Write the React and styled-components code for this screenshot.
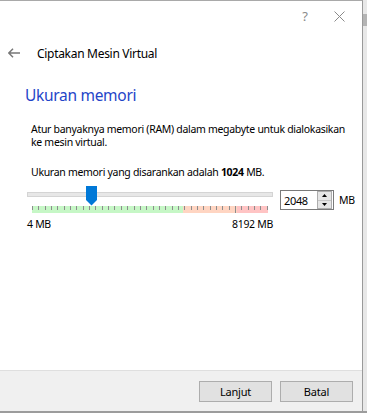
import React from 'react';
import styled, { createGlobalStyle } from 'styled-components';

const Global = createGlobalStyle`
  html, body {
    margin: 0;
    padding: 0;
    width: 367px;
    height: 413px;
    overflow: hidden;
    background: #dcdcdc;
    font-family: "Noto Sans", "Open Sans", sans-serif;
    color: #000;
  }
`;

const Screen = styled.div`
  display: flex;
  flex-direction: column;
  width: 367px;
  height: 413px;
`;

const Desk = styled.div`
  display: flex;
  height: 411px;
`;

const Dialog = styled.div`
  width: 362px;
  display: flex;
  flex-direction: column;
  background: #fff;
  border-top: 1px solid #a9a9a9;
  border-right: 1px solid #9a9a9a;
`;

const SideStrip = styled.div`
  flex: 1;
  display: flex;
  flex-direction: column;
  background: #e8e8e8;
`;

const Thumb = styled.div`
  margin-top: 14px;
  height: 12px;
  background: #b4b4b4;
`;

const Taskbar = styled.div`
  height: 2px;
  background: #9c9c9c;
`;

const TitleBar = styled.div`
  height: 30px;
  display: flex;
  justify-content: flex-end;
  align-items: center;
  color: #8a8a8a;
`;

const TitleBtn = styled.div`
  width: ${({ w }) => w}px;
  display: flex;
  justify-content: center;
  font-size: 13px;
`;

const Header = styled.div`
  display: flex;
  align-items: center;
  height: 44px;
  padding-left: 8px;
  font-size: 12px;
  letter-spacing: -0.3px;
`;

const Back = styled.div`
  width: 29px;
  display: flex;
`;

const Content = styled.div`
  flex: 1;
  padding: 9px 0 0 25px;
  display: flex;
  flex-direction: column;
`;

const Heading = styled.div`
  font-size: 15.5px;
  color: #1f45c8;
  letter-spacing: -0.3px;
`;

const Body = styled.div`
  padding: 17px 6px 0 6px;
  font-size: 10.5px;
  line-height: 13px;
  letter-spacing: -0.3px;
`;

const Para = styled.p`
  margin: 0 0 ${({ gap }) => gap || 0}px 0;
`;

const SliderRow = styled.div`
  display: flex;
  align-items: flex-start;
  margin-top: 7px;
  margin-left: 2px;
`;

const SliderCol = styled.div`
  width: 246px;
  display: flex;
  flex-direction: column;
`;

const TrackWrap = styled.div`
  position: relative;
  height: 20px;
`;

const Track = styled.div`
  margin-top: 6px;
  height: 3px;
  background: #e7e7e7;
  border: 1px solid #d4d4d4;
`;

const Handle = styled.svg`
  position: absolute;
  top: 0;
  left: 59px;
`;

const Scale = styled.div`
  margin: 0 5px;
  height: 7px;
  display: flex;
  justify-content: space-between;
  background: linear-gradient(to right,
    #c6f7c6 0%, #c6f7c6 64%,
    #ffd5c2 64%, #ffd5c2 87%,
    #ffc4c4 87%, #ffc4c4 100%);
`;

const Tick = styled.div`
  width: 1px;
  height: ${({ big }) => (big ? 7 : 4)}px;
  background: #8c8c8c;
`;

const Labels = styled.div`
  display: flex;
  justify-content: space-between;
  margin-top: 4px;
  font-size: 10.5px;
  letter-spacing: -0.3px;
`;

const Spin = styled.div`
  margin-left: 7px;
  margin-top: 4px;
  width: 48px;
  height: 18px;
  border: 1px solid #7a7a7a;
  display: flex;
  align-items: center;
  justify-content: space-between;
  padding: 0 1px 0 3px;
  box-sizing: content-box;
  font-size: 11px;
  letter-spacing: -0.35px;
`;

const SpinBtns = styled.div`
  width: 13px;
  height: 16px;
  display: flex;
  flex-direction: column;
  border: 1px solid #adadad;
  background: #e5e5e5;
`;

const SpinHalf = styled.div`
  flex: 1;
  display: flex;
  align-items: center;
  justify-content: center;
  & + & {
    border-top: 1px solid #c4c4c4;
  }
`;

const Unit = styled.div`
  margin: 7px 0 0 5px;
  font-size: 10.5px;
  letter-spacing: -0.3px;
`;

const Footer = styled.div`
  height: 39px;
  background: #f0f0f0;
  border-top: 1px solid #dfdfdf;
  display: flex;
  justify-content: flex-end;
  align-items: center;
  gap: 8px;
  padding-right: 9px;
  padding-top: 1px;
`;

const Button = styled.button`
  width: 73px;
  height: 21px;
  background: #e1e1e1;
  border: 1px solid #adadad;
  font-family: inherit;
  font-size: 11px;
  letter-spacing: -0.2px;
  padding: 0;
  color: #000;
`;

const ticks = Array.from({ length: 38 }, (_, i) => i);

export default function App() {
  return (
    <Screen>
      <Global />
      <Desk>
        <Dialog>
          <TitleBar>
            <TitleBtn w={22}>?</TitleBtn>
            <TitleBtn w={46}>
              <svg width="11" height="11" viewBox="0 0 11 11">
                <path d="M0.5 0.5 L10.5 10.5 M10.5 0.5 L0.5 10.5" stroke="#8a8a8a" strokeWidth="1" />
              </svg>
            </TitleBtn>
          </TitleBar>
          <Header>
            <Back>
              <svg width="12" height="10" viewBox="0 0 12 10">
                <path d="M0.8 5 H12 M5 0.8 L0.8 5 L5 9.2" stroke="#777" strokeWidth="1.5" fill="none" />
              </svg>
            </Back>
            Ciptakan Mesin Virtual
          </Header>
          <Content>
            <Heading>Ukuran memori</Heading>
            <Body>
              <Para gap={17}>
                Atur banyaknya memori (RAM) dalam megabyte untuk dialokasikan ke mesin virtual.
              </Para>
              <Para>
                Ukuran memori yang disarankan adalah <b>1024</b> MB.
              </Para>
            </Body>
            <SliderRow>
              <SliderCol>
                <TrackWrap>
                  <Track />
                  <Handle width="11" height="20" viewBox="0 0 11 20">
                    <path d="M0 0 H11 V14 L5.5 19.5 L0 14 Z" fill="#0078d7" />
                  </Handle>
                </TrackWrap>
                <Scale>
                  {ticks.map(i => <Tick key={i} big={i === 32} />)}
                </Scale>
                <Labels>
                  <span>4 MB</span>
                  <span>8192 MB</span>
                </Labels>
              </SliderCol>
              <Spin>
                <span>2048</span>
                <SpinBtns>
                  <SpinHalf>
                    <svg width="5" height="3" viewBox="0 0 5 3"><path d="M2.5 0 L5 3 H0 Z" fill="#000" /></svg>
                  </SpinHalf>
                  <SpinHalf>
                    <svg width="5" height="3" viewBox="0 0 5 3"><path d="M0 0 H5 L2.5 3 Z" fill="#000" /></svg>
                  </SpinHalf>
                </SpinBtns>
              </Spin>
              <Unit>MB</Unit>
            </SliderRow>
          </Content>
          <Footer>
            <Button>Lanjut</Button>
            <Button>Batal</Button>
          </Footer>
        </Dialog>
        <SideStrip>
          <Thumb />
        </SideStrip>
      </Desk>
      <Taskbar />
    </Screen>
  );
}
